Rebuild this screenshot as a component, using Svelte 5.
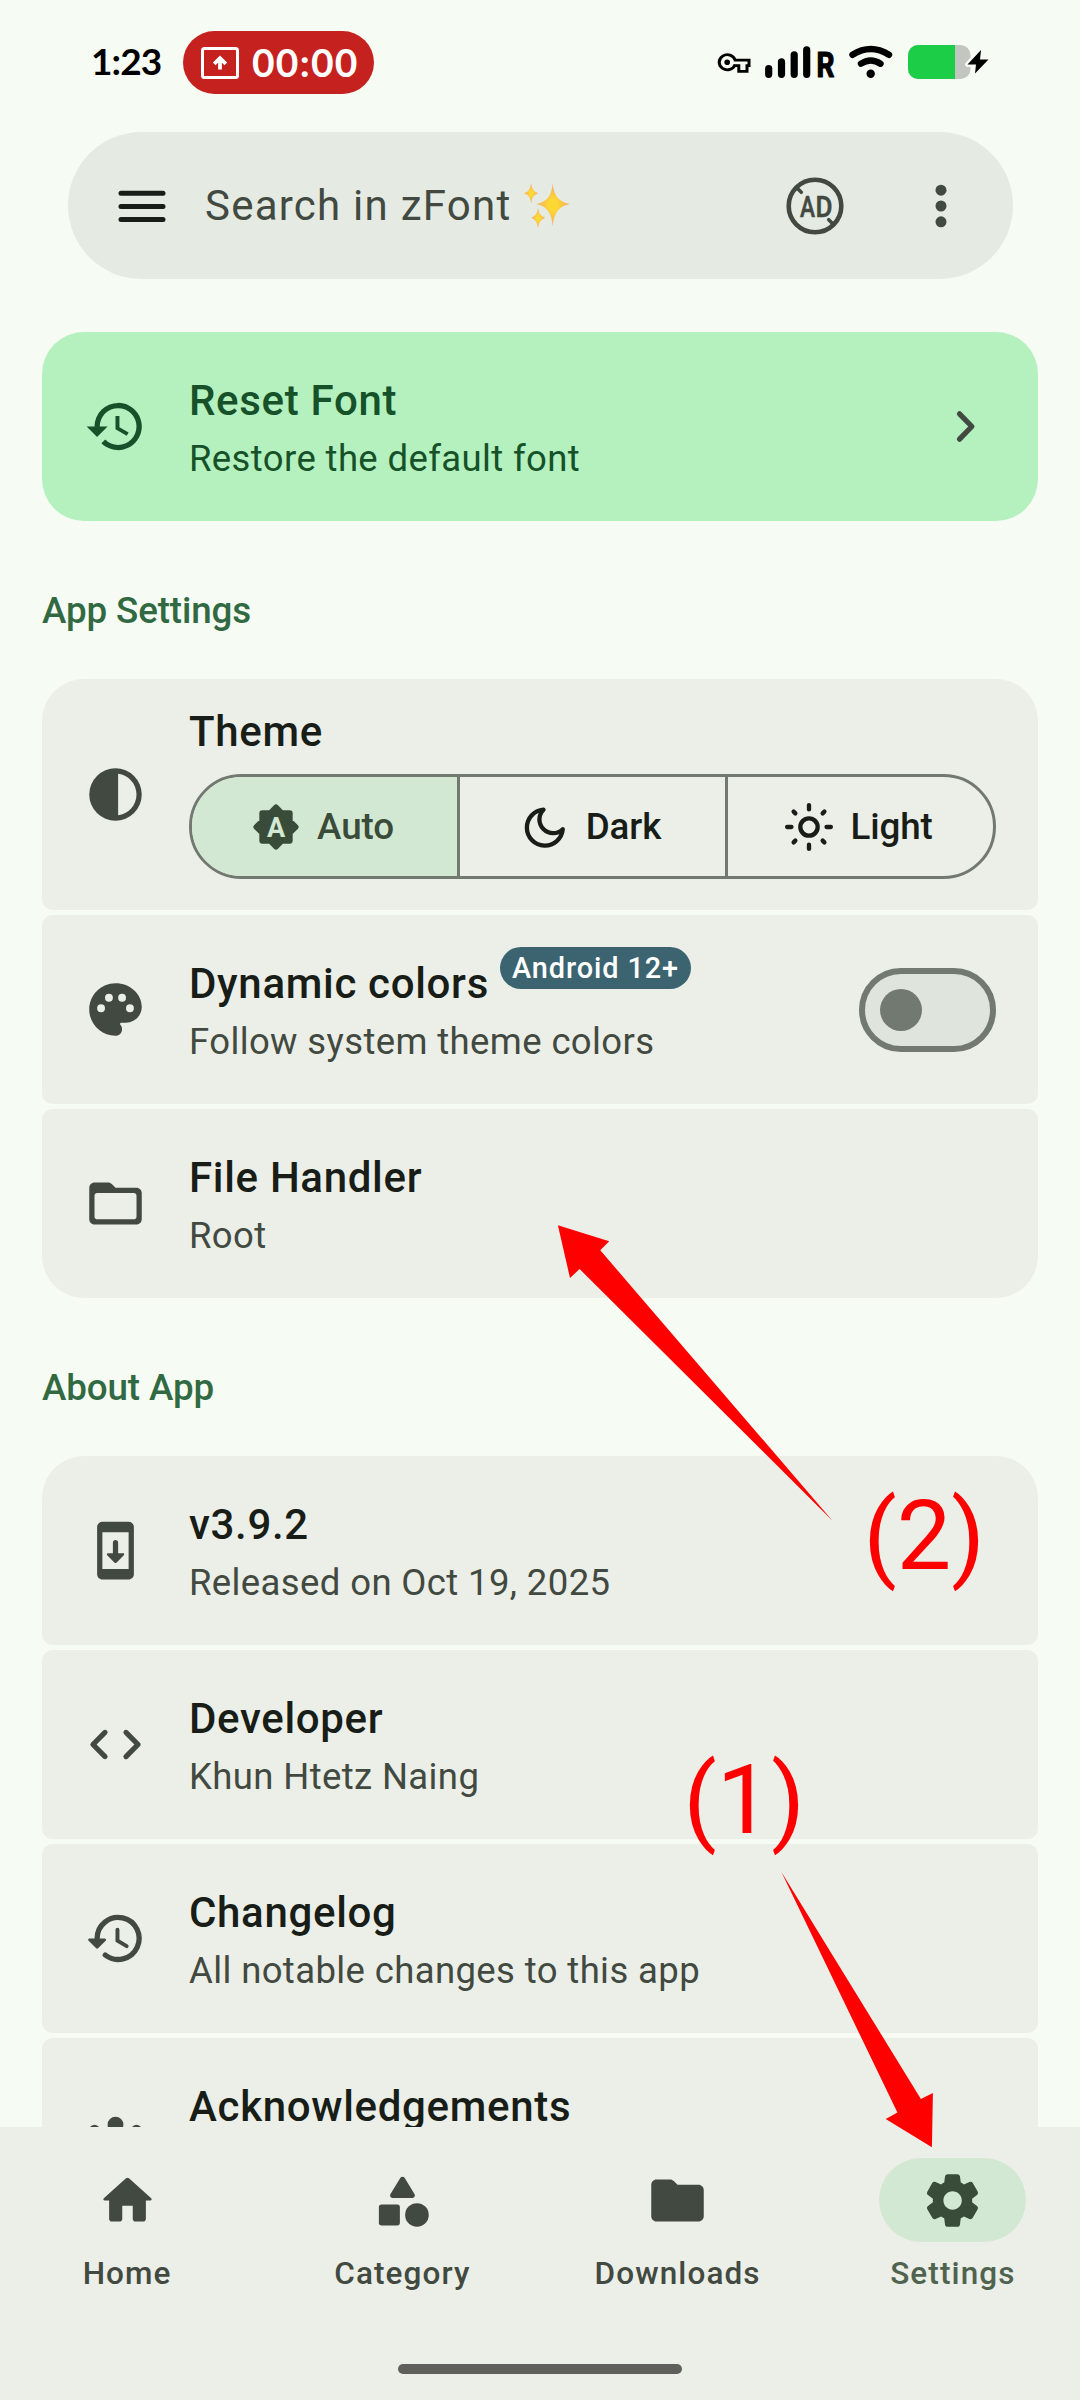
<script>
  const about = [
    { icon: 'update', title: 'v3.9.2', sub: 'Released on Oct 19, 2025' },
    { icon: 'code', title: 'Developer', sub: 'Khun Htetz Naing' },
    { icon: 'history', title: 'Changelog', sub: 'All notable changes to this app' },
    { icon: 'groups', title: 'Acknowledgements', sub: '' }
  ];
  const tabs = [
    { icon: 'home', label: 'Home' },
    { icon: 'category', label: 'Category' },
    { icon: 'folder', label: 'Downloads' },
    { icon: 'settings', label: 'Settings', active: true }
  ];
</script>

{#snippet icon(name)}
  <svg class="icon" viewBox="0 0 24 24" aria-hidden="true">
    {#if name === 'restore'}
      <path d="M13 3a9 9 0 0 0-9 9H1l3.89 3.89.07.14L9 12H6a7 7 0 1 1 7 7 6.97 6.97 0 0 1-4.94-2.06l-1.42 1.42A9 9 0 1 0 13 3zm-1 5v5l4.28 2.54.72-1.21-3.5-2.08V8H12z" />
    {:else if name === 'history'}
      <g fill="none" stroke="currentColor" stroke-width="2" stroke-linecap="round">
        <path d="M5 12a8 8 0 1 1 3.1 6.3" />
        <path stroke-width="1.5" d="M12.75 8.7v4.1l3.5 2.1" />
      </g>
      <path d="M2.1 12h5.8c.45 0 .67.54.35.85l-2.9 2.9a.5.5 0 0 1-.7 0l-2.9-2.9c-.32-.31-.1-.85.35-.85z" />
    {:else if name === 'contrast'}
      <path d="M12 2a10 10 0 1 0 0 20 10 10 0 0 0 0-20zm1 2.07c3.95.5 7 3.85 7 7.93s-3.05 7.44-7 7.93V4.07z" />
    {:else if name === 'palette'}
      <path d="M12 2C6.49 2 2 6.49 2 12s4.49 10 10 10c1.38 0 2.5-1.12 2.5-2.5 0-.61-.23-1.2-.64-1.67-.08-.1-.13-.21-.13-.33 0-.28.22-.5.5-.5H16c3.31 0 6-2.69 6-6 0-4.96-4.49-9-10-9zM6.5 13a1.5 1.5 0 1 1 0-3 1.5 1.5 0 0 1 0 3zm3-4a1.5 1.5 0 1 1 0-3 1.5 1.5 0 0 1 0 3zm5 0a1.5 1.5 0 1 1 0-3 1.5 1.5 0 0 1 0 3zm3 4a1.5 1.5 0 1 1 0-3 1.5 1.5 0 0 1 0 3z" />
    {:else if name === 'folder-open'}
      <path d="M20 6h-8l-1.41-1.41C10.21 4.21 9.7 4 9.17 4H4c-1.1 0-1.99.9-1.99 2L2 18c0 1.1.9 2 2 2h16c1.1 0 2-.9 2-2V8c0-1.1-.9-2-2-2zm-1 12H5c-.55 0-1-.45-1-1V9c0-.55.45-1 1-1h14c.55 0 1 .45 1 1v8c0 .55-.45 1-1 1z" />
    {:else if name === 'folder'}
      <path d="M10.59 4.59C10.21 4.21 9.7 4 9.17 4H4c-1.1 0-1.99.9-1.99 2L2 18c0 1.1.9 2 2 2h16c1.1 0 2-.9 2-2V8c0-1.1-.9-2-2-2h-8l-1.41-1.41z" />
    {:else if name === 'update'}
      <path d="M17 1H7c-1.1 0-2 .9-2 2v18c0 1.1.9 2 2 2h10c1.1 0 2-.9 2-2V3c0-1.1-.9-2-2-2zm0 18H7V5h10v14zm-1.2-6H13V9c0-.55-.45-1-1-1s-1 .45-1 1v4H9.21c-.45 0-.67.54-.35.85l2.79 2.79c.2.2.51.2.71 0l2.79-2.79c.31-.31.09-.85-.35-.85z" />
    {:else if name === 'code'}
      <path d="M8.7 15.9L4.8 12l3.9-3.9a.984.984 0 0 0 0-1.4.984.984 0 0 0-1.4 0l-4.59 4.59a.996.996 0 0 0 0 1.41l4.59 4.6c.39.39 1.01.39 1.4 0a.984.984 0 0 0 0-1.4zm6.6 0l3.9-3.9-3.9-3.9a.984.984 0 0 1 0-1.4.984.984 0 0 1 1.4 0l4.59 4.59c.39.39.39 1.02 0 1.41l-4.59 4.6a.984.984 0 0 1-1.4 0 .984.984 0 0 1 0-1.4z" />
    {:else if name === 'groups'}
      <circle cx="12" cy="9" r="3" /><circle cx="4" cy="11" r="2" /><circle cx="20" cy="11" r="2" />
      <path d="M6 18v-1.5c0-2 3-3 6-3s6 1 6 3V18z" />
    {:else if name === 'home'}
      <path d="M10 19v-5h4v5c0 .55.45 1 1 1h3c.55 0 1-.45 1-1v-7h1.7c.46 0 .68-.57.33-.87L12.67 3.6c-.38-.34-.96-.34-1.34 0l-8.36 7.53c-.34.3-.13.87.33.87H5v7c0 .55.45 1 1 1h3c.55 0 1-.45 1-1z" />
    {:else if name === 'category'}
      <path d="M11.15 3.4L7.43 9.48c-.41.66.07 1.52.85 1.52h7.43c.78 0 1.26-.86.85-1.52L12.85 3.4a.993.993 0 0 0-1.7 0z" />
      <circle cx="17.5" cy="17.5" r="4.5" />
      <rect x="3" y="13.5" width="8" height="8" rx="1" />
    {:else if name === 'settings'}
      <path d="M19.5 12c0-.23-.01-.45-.03-.68l1.86-1.41c.4-.3.51-.86.26-1.3l-1.87-3.23a.987.987 0 0 0-1.25-.42l-2.15.91c-.37-.26-.76-.49-1.17-.68l-.29-2.31c-.06-.5-.49-.88-.99-.88h-3.73c-.51 0-.94.38-1 .88l-.29 2.31c-.41.19-.8.42-1.17.68l-2.15-.91c-.46-.2-1-.02-1.25.42L2.41 8.62c-.25.44-.14.99.26 1.29l1.86 1.41a7.343 7.343 0 0 0 0 1.35l-1.86 1.41c-.4.3-.51.86-.26 1.3l1.87 3.23c.25.44.79.62 1.25.42l2.15-.91c.37.26.76.49 1.17.68l.29 2.31c.06.5.49.88.99.88h3.73c.5 0 .93-.38.99-.88l.29-2.31c.41-.19.8-.42 1.17-.68l2.15.91c.46.2 1 .02 1.25-.42l1.87-3.23c.25-.44.14-.99-.26-1.29l-1.86-1.41c.03-.23.04-.45.04-.68zm-7.46 3.5c-1.93 0-3.5-1.57-3.5-3.5s1.57-3.5 3.5-3.5 3.5 1.57 3.5 3.5-1.57 3.5-3.5 3.5z" />
    {/if}
  </svg>
{/snippet}

{#snippet row(name, title, sub)}
  <div class="row">
    {@render icon(name)}
    <div class="text">
      <div class="title">{title}</div>
      <div class="sub">{sub}</div>
    </div>
  </div>
{/snippet}

<div class="phone">
  <header class="status">
    <span class="clock">1:23</span>
    <span class="cast">
      <svg class="cast-icon" viewBox="0 0 38 32">
        <rect x="1.5" y="1.5" width="35" height="29" rx="2" fill="none" stroke="#fff" stroke-width="3" />
        <path d="M19 22.5V11M13.2 16.8L19 11.2l5.800 5.600" fill="none" stroke="#fff" stroke-width="3.800" />
      </svg>
      <span class="timer">00:00</span>
    </span>
    <svg class="indicators" viewBox="0 0 272 40">
      <!-- VPN key -->
      <path d="M17.1 19.7A8.1 8.1 0 1 1 17.1 15.3H31V21H29V27.2H20.8V21H17z" transform="translate(0 6) scale(1 .93)" fill="none" stroke="#000" stroke-width="3" />
      <circle cx="9.2" cy="22.3" r="2.8" />
      <!-- signal -->
      <g stroke="#000" stroke-width="7.2" stroke-linecap="round">
        <path d="M50.7 28.7V34.3M63.5 21.8V34.3M76.2 14.9V34.3M88.7 9.8V34.3" />
      </g>
      <text class="roam" x="98.5" y="37.4" textLength="18" lengthAdjust="spacingAndGlyphs">R</text>
      <!-- wifi -->
      <g fill="none" stroke="#000" stroke-width="6.4" stroke-linecap="round">
        <path d="M134.5 14.8Q152.7 3.2 171 14.8" />
        <path d="M143 23.7Q152.7 17.3 162.5 23.7" />
      </g>
      <circle cx="152.7" cy="33.8" r="4.2" />
      <!-- battery -->
      <rect x="190" y="5" width="62.5" height="34" rx="10" fill="#c3c6c0" />
      <path d="M200 5H237V39H200A10 10 0 0 1 190 29V15A10 10 0 0 1 200 5z" fill="#1ccd48" />
      <path d="M263 10L249.5 24.5H258L257 33.5L270.5 19.5H262z" fill="#000" stroke="#f6fbf3" stroke-width="5" paint-order="stroke" stroke-linejoin="round" />
    </svg>
  </header>

  <div class="search">
    <svg class="menu" viewBox="0 0 48 32"><path d="M3 3.2H45M3 16.5H45M3 29.5H45" /></svg>
    <span class="hint">Search in zFont</span>
    <svg class="sparkles" viewBox="0 0 48 46">
      <defs>
        <radialGradient id="gold"><stop offset=".25" stop-color="#fdd835" /><stop offset="1" stop-color="#f6a560" /></radialGradient>
      </defs>
      <g fill="url(#gold)">
        <path d="M29.3 0Q30.6 18.5 47 21Q30.6 23.5 29.3 44Q28 23.5 12.5 21Q28 18.5 29.3 0z" />
        <path d="M7.3 0Q8.3 8.5 14.5 10Q8.3 11.5 7.3 20.5Q6.3 11.5 0 10Q6.3 8.5 7.3 0z" />
        <path d="M14.3 25Q15.2 33 21.5 35Q15.2 37 14.3 45.5Q13.4 37 7.5 35Q13.4 33 14.3 25z" />
      </g>
    </svg>
    <svg class="noads" viewBox="0 0 58 58">
      <g fill="none" stroke="currentColor" stroke-linecap="round">
        <circle cx="29" cy="29" r="26.3" stroke-width="4.6" />
        <path stroke-width="3.5" d="M11 11L15.3 15.3M42.7 42.7L47 47" />
      </g>
      <text x="14" y="39.5" textLength="15" lengthAdjust="spacingAndGlyphs">A</text>
      <text x="29.5" y="39.5" textLength="17" lengthAdjust="spacingAndGlyphs">D</text>
    </svg>
    <svg class="more" viewBox="0 0 12 44"><circle cx="6" cy="6.2" r="5.5" /><circle cx="6" cy="22" r="5.5" /><circle cx="6" cy="37.8" r="5.5" /></svg>
  </div>

  <main>
    <section class="reset">
      {@render icon('restore')}
      <div class="text">
        <div class="title">Reset Font</div>
        <div class="sub">Restore the default font</div>
      </div>
      <svg class="chevron" viewBox="0 0 24 24"><path d="M10.1 7.2L14.8 12L10.1 16.8" /></svg>
    </section>

    <h2>App Settings</h2>
    <section class="group">
      <div class="row theme">
        {@render icon('contrast')}
        <div class="text">
          <div class="title">Theme</div>
          <div class="segments">
            <button class="on">
              <svg viewBox="0 0 24 24">
                <path class="badge-shape" d="M18.4 9.3V5.6h-3.7L12 2.9 9.3 5.6H5.6v3.7L2.9 12l2.7 2.7v3.7h3.7L12 21.1l2.700-2.700h3.700v-3.700L21.100 12z" />
                <text x="12" y="16.4" text-anchor="middle">A</text>
              </svg>Auto
            </button>
            <button>
              <svg viewBox="0 0 24 24"><path class="line" d="M11.3 4A8.3 8.3 0 1 0 20.2 13A5.6 5.6 0 0 1 11.3 4z" /></svg>Dark
            </button>
            <button>
              <svg viewBox="0 0 24 24"><circle class="line" cx="12" cy="12" r="4" /><path class="line" d="M12 1.9V3.9M12 20.1V22.1M1.9 12H3.9M20.1 12H22.1M4.9 4.9L5.7 5.7M18.3 18.3L19.1 19.1M4.9 19.1L5.7 18.3M18.3 5.7L19.1 4.9" /></svg>Light
            </button>
          </div>
        </div>
      </div>
      <div class="row">
        {@render icon('palette')}
        <div class="text">
          <div class="title">Dynamic colors<span class="tag">Android 12+</span></div>
          <div class="sub">Follow system theme colors</div>
        </div>
        <span class="switch" role="switch" aria-checked="false" tabindex="0"></span>
      </div>
      {@render row('folder-open', 'File Handler', 'Root')}
    </section>

    <h2>About App</h2>
    <section class="group">
      {#each about as item}
        {@render row(item.icon, item.title, item.sub)}
      {/each}
    </section>
  </main>

  <nav>
    <div class="tabs">
      {#each tabs as tab}
        <div class="tab" class:active={tab.active}>
          <span class="pill">{@render icon(tab.icon)}</span>
          <span>{tab.label}</span>
        </div>
      {/each}
    </div>
    <div class="handle"></div>
  </nav>

  <!-- hand-drawn step markers over the screen -->
  <svg class="marks" viewBox="0 0 1080 2400">
    <path d="M557.9 1225.3L609.2 1241.3L600.3 1250.3L832.7 1520.9L579.6 1269L570 1278z" />
    <path d="M781.4 1872L920.9 2099L932.9 2093L931.9 2147.2L885.7 2119L897.4 2112.5z" />
    <text x="863.5" y="1568.5">(2)</text>
    <text x="683.5" y="1832.5">(1)</text>
  </svg>
</div>

<style>
  :global(body) { background: #f6fbf3; }
  .phone {
    position: relative; width: 1080px; height: 2400px; overflow: hidden;
    display: flex; flex-direction: column; background: #f6fbf3;
    color: #181d18; font-family: Roboto, sans-serif;
  }
  .status { height: 132px; flex: none; display: flex; align-items: flex-start; box-sizing: border-box; padding: 31px 90px 0 91px; }
  .clock, .timer { font-family: Lato, sans-serif; font-weight: 700; line-height: 63px; }
  .clock { width: 92px; flex: none; font-size: 37px; line-height: 60px; color: #000; letter-spacing: -0.9px; }
  .cast { width: 191px; height: 63px; border-radius: 32px; background: #c5221f; color: #fff; display: flex; align-items: center; box-sizing: border-box; padding-left: 18px; }
  .cast-icon { width: 38px; height: 32px; margin-right: 13px; }
  .timer { font-size: 39px; letter-spacing: 1.2px; }
  .indicators { width: 272px; height: 40px; margin: 9px 0 0 344px; flex: none; overflow: visible; }
  .roam { font: 700 35.5px Roboto, sans-serif; stroke: #000; stroke-width: 1.2px; stroke-linejoin: round; }

  .search { height: 147px; flex: none; margin: 0 67px 0 68px; border-radius: 74px; background: #e5eae2; display: flex; align-items: center; padding-left: 50px; box-sizing: border-box; color: #424940; }
  .menu { width: 48px; height: 32px; margin: 0 39px 0 0; stroke: #181d18; stroke-width: 5; stroke-linecap: round; }
  .hint { font-size: 42px; letter-spacing: 1.24px; width: 319px; white-space: nowrap; }
  .sparkles { width: 47px; height: 46px; }
  .noads { width: 58px; height: 58px; margin-left: 215px; }
  .noads text { font: 500 30px Roboto, sans-serif; fill: currentColor; stroke: currentColor; stroke-width: .6px; }
  .more { width: 12px; height: 44px; margin-left: 91px; fill: currentColor; }

  main { flex: 1; min-height: 0; overflow: hidden; padding: 53px 42px 0; }
  .icon { width: 63px; height: 63px; flex: none; fill: currentColor; }
  .reset, .row { height: 189px; box-sizing: border-box; display: flex; align-items: center; gap: 42px; padding: 0 42px; }
  .reset { background: #b4f1be; color: #165129; border-radius: 42px; }
  .text { flex: 1; }
  .title { position: relative; font-size: 42px; line-height: 63px; font-weight: 500; letter-spacing: .68px; white-space: nowrap; }
  .sub { height: 51.5px; padding-top: 1px; font-size: 36.5px; line-height: 52.5px; letter-spacing: .38px; }
  .chevron { width: 63px; height: 63px; fill: none; stroke: #424940; stroke-width: 2; stroke-linecap: round; stroke-linejoin: round; }
  h2 { margin: 0; height: 158px; line-height: 179px; font-size: 36.75px; font-weight: 500; letter-spacing: -.12px; color: #316a42; }
  .group { display: flex; flex-direction: column; gap: 5px; }
  .row { flex: none; background: #ebefe7; border-radius: 10.5px; }
  .row:first-child { border-radius: 42px 42px 10.5px 10.5px; }
  .row:last-child { border-radius: 10.5px 10.5px 42px 42px; }
  .row .icon, .row .sub { color: #424940; }
  .theme { height: 231px; }
  .segments { display: flex; height: 105px; margin: 11px 0 10px; box-sizing: border-box; border: 3px solid #727970; border-radius: 53px; overflow: hidden; }
  .segments button { flex: 1; border: 0; padding: 0 5px 0 0; background: none; display: flex; align-items: center; justify-content: center; gap: 15px; font: 500 36.75px Roboto, sans-serif; letter-spacing: -.1px; color: #181d18; }
  .segments button + button { border-left: 3px solid #727970; }
  .segments button.on { background: #d3e8d2; color: #394b39; }
  .segments svg { width: 52px; height: 52px; fill: none; }
  .line { stroke: currentColor; stroke-width: 2; stroke-linecap: round; stroke-linejoin: round; }
  .badge-shape { fill: currentColor; stroke: currentColor; stroke-width: 2.6; stroke-linejoin: round; }
  .segments text { font: 700 12.5px Roboto, sans-serif; fill: #d3e8d2; }
  .tag { position: absolute; margin-left: 11px; top: -5px; height: 42px; line-height: 42px; padding: 0 12px; border-radius: 21px; background: #3b6470; color: #fff; font-size: 28.9px; letter-spacing: .9px; }
  .switch { width: 137px; height: 84px; box-sizing: border-box; border: 6px solid #727970; border-radius: 42px; background: #dfe4dc; padding: 15px; }
  .switch::before { content: ''; display: block; width: 42px; height: 42px; border-radius: 50%; background: #727970; }

  nav { height: 273px; flex: none; background: #ebefe7; }
  .tabs { display: flex; gap: 21px; padding-top: 31px; height: 206px; }
  .tab { flex: 1; display: flex; flex-direction: column; align-items: center; gap: 11px; color: #424940; font-size: 31.5px; line-height: 42px; font-weight: 500; letter-spacing: 1.1px; }
  .pill { width: 147px; height: 84px; border-radius: 42px; display: flex; align-items: center; justify-content: center; }
  .active { color: #50634f; }
  .active .pill { background: #d3e8d2; color: #394b39; }
  .handle { width: 284px; height: 10px; border-radius: 5px; background: #5f605b; margin: 0 auto; }
  .marks { position: absolute; inset: 0; width: 1080px; height: 2400px; fill: #f00; pointer-events: none; }
  .marks text { font: 400 97px Roboto, sans-serif; }
</style>
